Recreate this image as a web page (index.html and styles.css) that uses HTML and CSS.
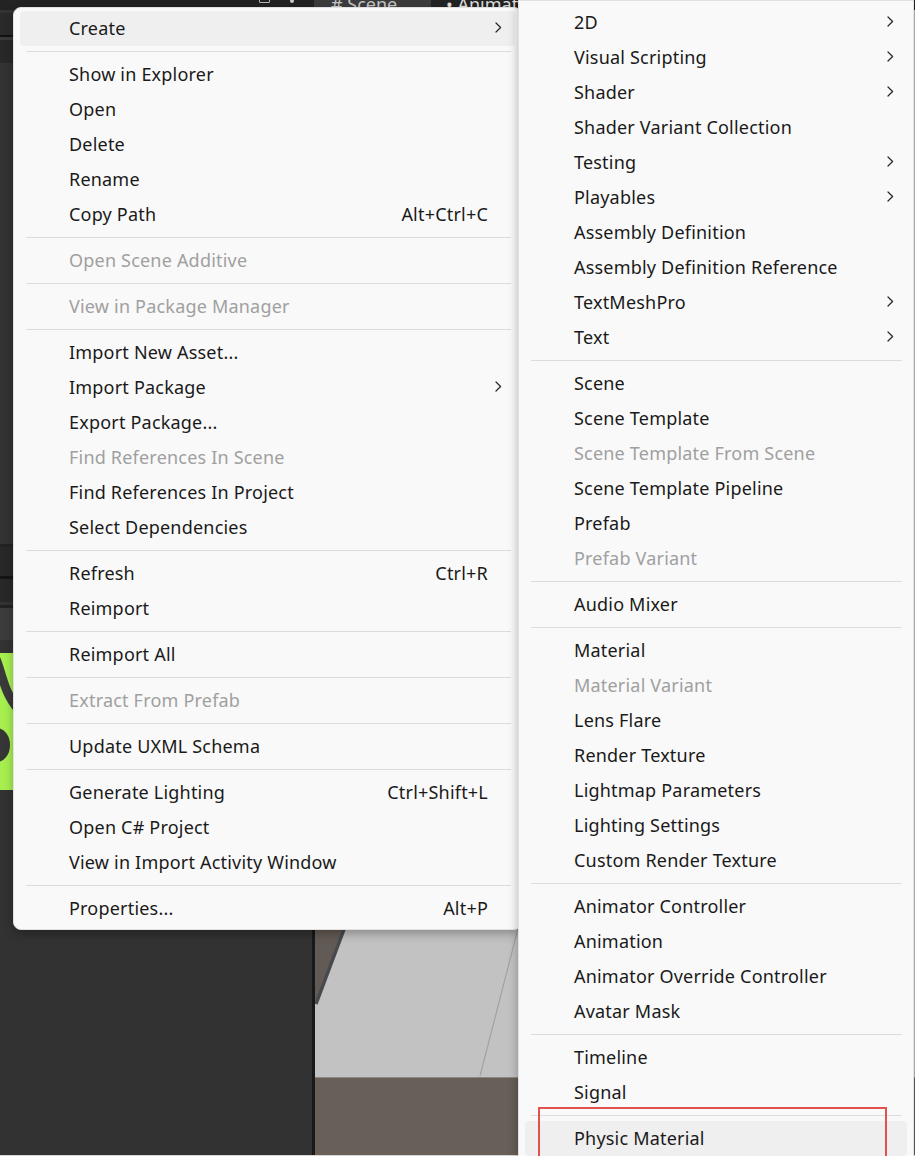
FILE: index.html
```html
<!DOCTYPE html>
<html lang="en">
<head>
<meta charset="utf-8">
<title>Unity Assets Context Menu</title>
<link rel="stylesheet" href="styles.css">
</head>
<body>
<div class="screen">
  <div class="editor">
    <div class="topbar">
      <span class="tb-square"></span>
      <span class="tb-dot"></span>
      <div class="tab tab-active"><span class="tab-text"># Scene</span></div>
      <div class="tab"><span class="tab-text">• Animator</span></div>
    </div>
    <div class="workspace">
      <div class="left-panel">
        <div class="st s1"></div>
        <div class="st s2"></div>
        <div class="st s3"></div>
        <div class="st s4"></div>
        <div class="st s5"></div>
        <div class="st s6"></div>
        <div class="st s7"></div>
        <div class="st s8"></div>
        <div class="st s9"></div>
        <div class="st s10"></div>
        <div class="st s11"></div>
        <div class="st s12"></div>
        <div class="st s13"></div>
        <div class="st s14"></div>
        <svg class="green-art" width="312" height="137" viewBox="0 0 312 137">
          <rect x="0" y="0" width="312" height="137" fill="#a6ef4f"/>
          <path d="M-4 6 C 2 20, 4 40, 18 56" stroke="#3a3a3a" stroke-width="9" fill="none"/>
          <ellipse cx="-3" cy="92" rx="13" ry="17" fill="#363636"/>
        </svg>
        <div class="st fill"></div>
      </div>
      <div class="divider"></div>
      <div class="scene">
        <svg class="scene-art" width="600" height="1146" viewBox="0 0 600 1146">
          <rect x="0" y="0" width="600" height="1067" fill="#c2c2c2"/>
          <rect x="0" y="1067" width="600" height="79" fill="#675f58"/>
          <line x1="0" y1="1067.5" x2="600" y2="1067.5" stroke="#8c8782" stroke-width="1"/>
          <polygon points="0,850 54,850 0,993" fill="#625a54"/>
          <line x1="55" y1="850" x2="1" y2="994" stroke="#48494c" stroke-width="3.5"/>
          <line x1="222" y1="845" x2="165" y2="1066" stroke="#a2a2a2" stroke-width="1.2"/>
        </svg>
      </div>
    </div>
  </div>

  <div class="menu menu-main">
    <div class="item sub hl"><span class="label">Create</span><svg class="arrow" width="7" height="11" viewBox="0 0 7 11"><path d="M1 1 L5.6 5.5 L1 10"/></svg></div>
    <div class="sep"></div>
    <div class="item"><span class="label">Show in Explorer</span></div>
    <div class="item"><span class="label">Open</span></div>
    <div class="item"><span class="label">Delete</span></div>
    <div class="item"><span class="label">Rename</span></div>
    <div class="item"><span class="label">Copy Path</span><span class="sc">Alt+Ctrl+C</span></div>
    <div class="sep"></div>
    <div class="item off"><span class="label">Open Scene Additive</span></div>
    <div class="sep"></div>
    <div class="item off"><span class="label">View in Package Manager</span></div>
    <div class="sep"></div>
    <div class="item"><span class="label">Import New Asset...</span></div>
    <div class="item sub"><span class="label">Import Package</span><svg class="arrow" width="7" height="11" viewBox="0 0 7 11"><path d="M1 1 L5.6 5.5 L1 10"/></svg></div>
    <div class="item"><span class="label">Export Package...</span></div>
    <div class="item off"><span class="label">Find References In Scene</span></div>
    <div class="item"><span class="label">Find References In Project</span></div>
    <div class="item"><span class="label">Select Dependencies</span></div>
    <div class="sep"></div>
    <div class="item"><span class="label">Refresh</span><span class="sc">Ctrl+R</span></div>
    <div class="item"><span class="label">Reimport</span></div>
    <div class="sep"></div>
    <div class="item"><span class="label">Reimport All</span></div>
    <div class="sep"></div>
    <div class="item off"><span class="label">Extract From Prefab</span></div>
    <div class="sep"></div>
    <div class="item"><span class="label">Update UXML Schema</span></div>
    <div class="sep"></div>
    <div class="item"><span class="label">Generate Lighting</span><span class="sc">Ctrl+Shift+L</span></div>
    <div class="item"><span class="label">Open C# Project</span></div>
    <div class="item"><span class="label">View in Import Activity Window</span></div>
    <div class="sep"></div>
    <div class="item"><span class="label">Properties...</span><span class="sc">Alt+P</span></div>
  </div>

  <div class="menu menu-create">
    <div class="item sub"><span class="label">2D</span><svg class="arrow" width="7" height="11" viewBox="0 0 7 11"><path d="M1 1 L5.6 5.5 L1 10"/></svg></div>
    <div class="item sub"><span class="label">Visual Scripting</span><svg class="arrow" width="7" height="11" viewBox="0 0 7 11"><path d="M1 1 L5.6 5.5 L1 10"/></svg></div>
    <div class="item sub"><span class="label">Shader</span><svg class="arrow" width="7" height="11" viewBox="0 0 7 11"><path d="M1 1 L5.6 5.5 L1 10"/></svg></div>
    <div class="item"><span class="label">Shader Variant Collection</span></div>
    <div class="item sub"><span class="label">Testing</span><svg class="arrow" width="7" height="11" viewBox="0 0 7 11"><path d="M1 1 L5.6 5.5 L1 10"/></svg></div>
    <div class="item sub"><span class="label">Playables</span><svg class="arrow" width="7" height="11" viewBox="0 0 7 11"><path d="M1 1 L5.6 5.5 L1 10"/></svg></div>
    <div class="item"><span class="label">Assembly Definition</span></div>
    <div class="item"><span class="label">Assembly Definition Reference</span></div>
    <div class="item sub"><span class="label">TextMeshPro</span><svg class="arrow" width="7" height="11" viewBox="0 0 7 11"><path d="M1 1 L5.6 5.5 L1 10"/></svg></div>
    <div class="item sub"><span class="label">Text</span><svg class="arrow" width="7" height="11" viewBox="0 0 7 11"><path d="M1 1 L5.6 5.5 L1 10"/></svg></div>
    <div class="sep"></div>
    <div class="item"><span class="label">Scene</span></div>
    <div class="item"><span class="label">Scene Template</span></div>
    <div class="item off"><span class="label">Scene Template From Scene</span></div>
    <div class="item"><span class="label">Scene Template Pipeline</span></div>
    <div class="item"><span class="label">Prefab</span></div>
    <div class="item off"><span class="label">Prefab Variant</span></div>
    <div class="sep"></div>
    <div class="item"><span class="label">Audio Mixer</span></div>
    <div class="sep"></div>
    <div class="item"><span class="label">Material</span></div>
    <div class="item off"><span class="label">Material Variant</span></div>
    <div class="item"><span class="label">Lens Flare</span></div>
    <div class="item"><span class="label">Render Texture</span></div>
    <div class="item"><span class="label">Lightmap Parameters</span></div>
    <div class="item"><span class="label">Lighting Settings</span></div>
    <div class="item"><span class="label">Custom Render Texture</span></div>
    <div class="sep"></div>
    <div class="item"><span class="label">Animator Controller</span></div>
    <div class="item"><span class="label">Animation</span></div>
    <div class="item"><span class="label">Animator Override Controller</span></div>
    <div class="item"><span class="label">Avatar Mask</span></div>
    <div class="sep"></div>
    <div class="item"><span class="label">Timeline</span></div>
    <div class="item"><span class="label">Signal</span></div>
    <div class="sep"></div>
    <div class="item hl"><span class="label">Physic Material</span></div>
  </div>

  <div class="callout"></div>
</div>
</body>
</html>
```

FILE: styles.css
```css
html, body {
  margin: 0;
  padding: 0;
  background: #ffffff;
}

.screen {
  position: relative;
  width: 915px;
  height: 1156px;
  font-family: "Noto Sans", "Open Sans", "Liberation Sans", sans-serif;
}

/* ---------- editor background ---------- */
.editor {
  display: flex;
  flex-direction: column;
  width: 915px;
  height: 1156px;
  overflow: hidden;
  background: #333333;
  border-bottom: 1px solid #d6d6d6;
  box-sizing: border-box;
}

.topbar {
  height: 10px;
  flex: none;
  display: flex;
  align-items: flex-start;
  background: #232323;
  overflow: hidden;
}

.tb-square {
  width: 11px;
  height: 11px;
  margin-left: 259px;
  margin-top: -8px;
  border: 1px solid #b8b8b8;
  border-radius: 1px;
  box-sizing: border-box;
}

.tb-dot {
  width: 4px;
  height: 4px;
  margin-left: 20px;
  margin-top: -1px;
  border-radius: 50%;
  background: #c8c8c8;
}

.tab {
  height: 10px;
  display: flex;
  align-items: flex-end;
  overflow: hidden;
}

.tab-active {
  margin-left: 20px;
  width: 117px;
  background: #3c3c3c;
}

.tab-text {
  font-size: 18px;
  line-height: 18px;
  color: #c4c4c4;
  margin-bottom: -3px;
  padding-left: 17px;
  white-space: nowrap;
}

.tab:not(.tab-active) .tab-text {
  color: #dcdcdc;
  padding-left: 15px;
}

.workspace {
  flex: 1;
  display: flex;
  min-height: 0;
}

.left-panel {
  width: 312px;
  flex: none;
  display: flex;
  flex-direction: column;
}

.st { flex: none; }
.s1 { height: 3px; background: #333333; }
.s2 { height: 22px; background: #2a2a2a; }
.s3 { height: 2px; background: #121212; }
.s4 { height: 3px; background: #3a3a3a; }
.s5 { height: 23px; background: #282828; }
.s6 { height: 481px; background: #333333; }
.s7 { height: 3px; background: #222222; }
.s8 { height: 29px; background: #282828; }
.s9 { height: 3px; background: #141414; }
.s10 { height: 23px; background: #282828; }
.s11 { height: 3px; background: #333333; }
.s12 { height: 3px; background: #222222; }
.s13 { height: 32px; background: #3c3c3c; }
.s14 { height: 13px; background: #333333; }
.green-art { display: block; flex: none; }
.st.fill { flex: 1; background: #323232; }

.divider {
  width: 3px;
  flex: none;
  background: #191919;
}

.scene {
  flex: 1;
  overflow: hidden;
  background: #c2c2c2;
}

.scene-art { display: block; }

/* ---------- menus ---------- */
.menu {
  position: absolute;
  box-sizing: border-box;
  background: #f9f9f9;
  border: 1px solid #e1e1e1;
  border-radius: 8px;
  box-shadow: 0 4px 10px rgba(0, 0, 0, 0.28);
  color: #1a1a1a;
  font-size: 18px;
  letter-spacing: 0.2px;
}

.menu-main {
  left: 13px;
  top: 7px;
  width: 509px;
  padding: 2.5px 0 3px;
}

.menu-create {
  left: 518px;
  top: 0;
  width: 396px;
  height: 1156px;
  overflow: hidden;
  padding: 3.5px 0 0;
  border-bottom: none;
  border-radius: 0;
}

.item {
  height: 35px;
  display: flex;
  align-items: center;
  margin: 0 6px;
  padding: 0 27px 1px 49px;
  box-sizing: border-box;
  border-radius: 4px;
  white-space: nowrap;
}

.item.sub {
  padding-right: 13px;
}

.item.hl {
  background: #efefef;
}

.item.off {
  color: #a0a0a0;
}

.label {
  flex: 1;
}

.sc {
  flex: none;
}

.arrow {
  flex: none;
  display: block;
}

.arrow path {
  fill: none;
  stroke: #2a2a2a;
  stroke-width: 1.25;
  stroke-linecap: round;
  stroke-linejoin: round;
}

.sep {
  height: 1px;
  margin: 5px 10px 5px 12px;
  background: #dcdcdc;
}

.menu-create .sep {
  margin-right: 11px;
}

/* ---------- annotation ---------- */
.callout {
  position: absolute;
  left: 538px;
  top: 1107px;
  width: 349px;
  height: 54px;
  box-sizing: border-box;
  border: 2px solid #e3514e;
}
```
